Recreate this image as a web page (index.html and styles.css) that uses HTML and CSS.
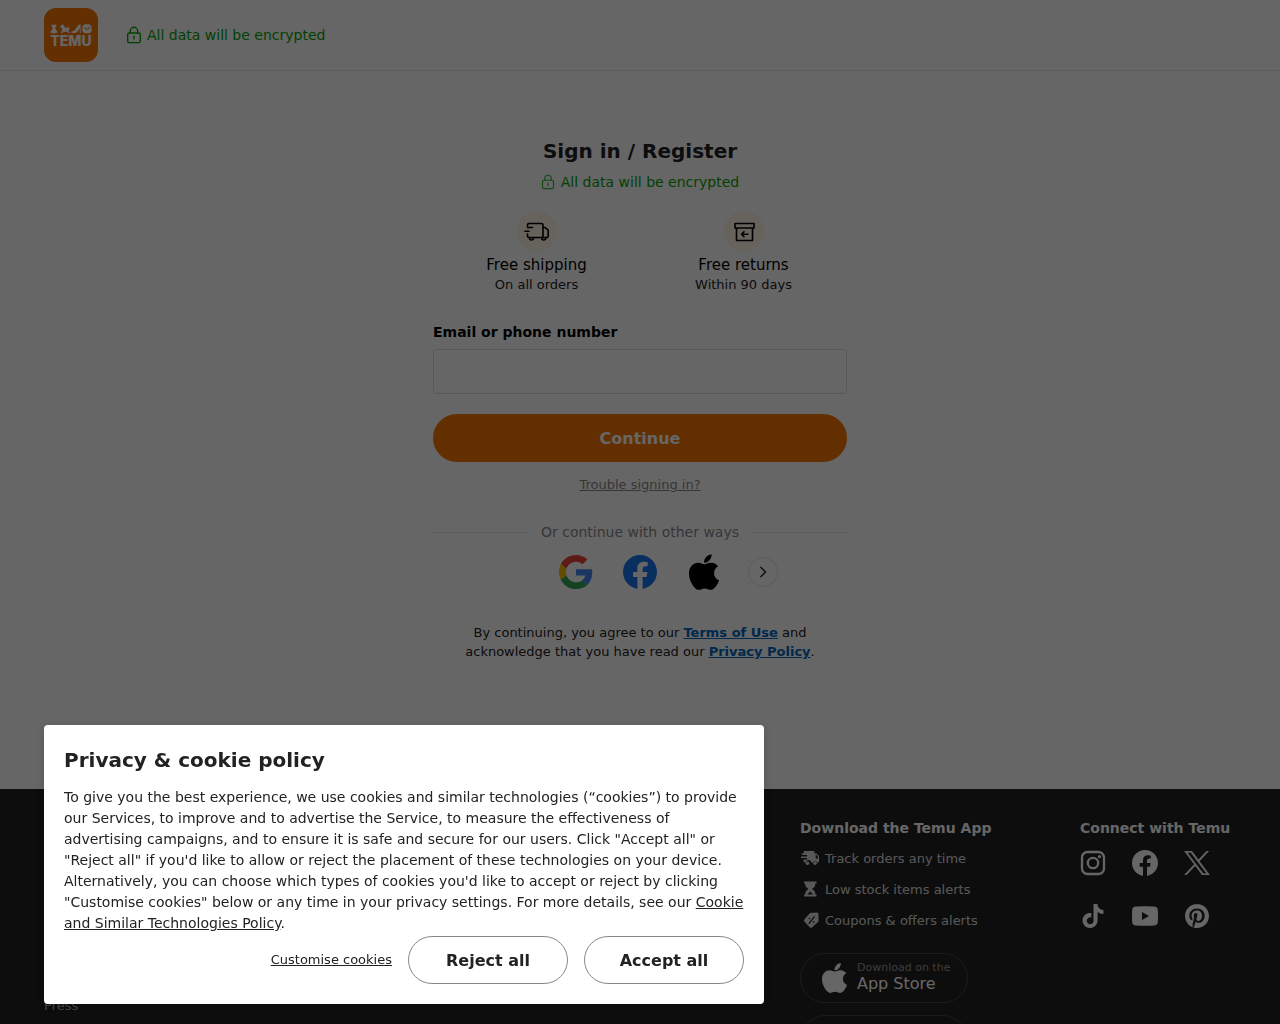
FILE: index.html
```
<!doctype html>
<html lang="en">
<head>
    <meta charset="UTF-8">
    <meta name="viewport" content="width=device-width, initial-scale=1.0">
    <link rel="stylesheet" href="styles.css">
    <title>Temu | Sign in</title>
</head>
<body>
    <!-- shared icons -->
    <svg class="sprite" width="0" height="0" aria-hidden="true">
        <symbol id="lock" viewBox="0 0 16 18">
            <g fill="none" stroke="currentColor" stroke-width="1.4" stroke-linecap="round">
                <rect x="1.7" y="7" width="12.6" height="9.6" rx="1.5"/>
                <path d="M4.3 7V5a3.7 3.7 0 0 1 7.4 0v2M8 10.3v2.8"/>
            </g>
        </symbol>
        <symbol id="apple" viewBox="4 32 376 448">
            <path fill="currentColor" d="M318.7 268.7c-.2-36.7 16.4-64.4 50-84.8-18.8-26.9-47.2-41.7-84.7-44.6-35.5-2.8-74.3 20.7-88.5 20.7-15 0-49.4-19.7-76.4-19.7C63.3 141.2 4 184.8 4 273.5q0 39.3 14.4 81.2c12.8 36.7 59 126.7 107.2 125.2 25.2-.6 43-17.9 75.8-17.9 31.8 0 48.3 17.9 76.4 17.9 48.6-.7 90.4-82.5 102.6-119.3-65.2-30.7-61.7-90-61.7-91.9zm-56.6-164.2c27.3-32.4 24.8-61.9 24-72.5-24.1 1.4-52 16.4-67.9 34.9-17.5 19.8-27.8 44.3-25.6 71.9 26.1 2 49.9-11.4 69.5-34.3z"/>
        </symbol>
        <symbol id="facebook" viewBox="0 0 24 24">
            <path fill="currentColor" d="M24 12.073c0-6.627-5.373-12-12-12s-12 5.373-12 12c0 5.99 4.388 10.954 10.125 11.854v-8.385H7.078v-3.47h3.047V9.43c0-3.007 1.792-4.669 4.533-4.669 1.312 0 2.686.235 2.686.235v2.953H15.83c-1.491 0-1.956.925-1.956 1.874v2.25h3.328l-.532 3.47h-2.796v8.385C19.612 23.027 24 18.062 24 12.073z"/>
        </symbol>
    </svg>

    <header class="header">
        <a class="logo" href="#" aria-label="Temu">
            <svg width="42" height="10" viewBox="0 0 42 10" fill="currentColor" aria-hidden="true">
                <path d="M2 0l1.3 1h1.4L6 0l.3 2.200-1 1.800C5.500 5.500 7.500 7 7.800 8.600 6 9.700 2 9.700.200 8.600.500 7 2.500 5.500 2.700 4l-1-1.800z"/>
                <path d="M10 2.600L12.300.400l1.200.400 1.700 3h2.300l1.300-1 1 2-1.500 1.400 1.500 2.500-1.200.5-1.500-1.500h-3.400l-1.600 1.500-1.200-.6L12.300 6l-.6-2.400-1.400.3z"/>
                <path d="M21.300 8.900V7.700c3-.4 5.200-3.200 6.600-6.400L30.500.200l.3 8.700h-.9l-.2-4.600c-1.500 2.400-2.700 4.600-4.500 4.600z"/>
                <path fill-rule="evenodd" d="M34.500.300h5l2.100 2.300v4.600L39.800 9.200h-5.500l-1.900-2V2.600zM34.200 3.100c.8 3.400 5 3.400 5.700 0l-1-.2c-.5 2-3.300 2-3.700 0z"/>
            </svg>
            <span>TEMU</span>
        </a>
        <p class="encrypted">
            <svg width="16" height="18" aria-hidden="true"><use href="#lock"/></svg>
            All data will be encrypted
        </p>
    </header>

    <main class="login">
        <h1>Sign in / Register</h1>
        <p class="encrypted encrypted-small">
            <svg width="14" height="16" aria-hidden="true"><use href="#lock"/></svg>
            All data will be encrypted
        </p>

        <div class="benefits">
            <div class="benefit">
                <span class="benefit-icon">
                    <svg width="26" height="24" viewBox="0 -2 26 24" fill="none" stroke="#000" stroke-width="1.600" stroke-linecap="round" stroke-linejoin="round" aria-hidden="true">
                        <path d="M3.500 5V4a1.500 1.500 0 0 1 1.500-1.500h12.500a1.500 1.500 0 0 1 1.500 1.500v12.500M3.500 6.500h5M1 10.200h4M3.500 13v2a1.500 1.500 0 0 0 1.500 1.500h14M19 6.500h2l3.200 2.700v5.800a1.500 1.500 0 0 1-1.500 1.500H19"/>
                        <path d="M5.500 17a2 2 0 0 0 4 0M17.800 17a2 2 0 0 0 4 0"/>
                    </svg>
                </span>
                <strong>Free shipping</strong>
                <span>On all orders</span>
            </div>
            <div class="benefit">
                <span class="benefit-icon">
                    <svg width="24" height="24" viewBox="-1.500 -3 24 24" fill="none" stroke="#000" stroke-width="1.600" stroke-linecap="round" stroke-linejoin="round" aria-hidden="true">
                        <path d="M1.500 1.500h19V6h-19zM3 6v12.500h16V6M8 12.300h6.500M10.500 9.800L8 12.300l2.500 2.500"/>
                    </svg>
                </span>
                <strong>Free returns</strong>
                <span>Within 90 days</span>
            </div>
        </div>

        <form class="form">
            <label for="account">Email or phone number</label>
            <input type="text" id="account" name="account">
            <button class="continue" type="submit">Continue</button>
        </form>
        <a class="trouble" href="#">Trouble signing in?</a>

        <div class="divider">Or continue with other ways</div>
        <div class="ways">
            <div class="ways-list">
                <button type="button" aria-label="Google">
                    <svg width="34" height="34" viewBox="0 0 48 48" aria-hidden="true">
                        <path fill="#EA4335" d="M24 9.500c3.540 0 6.710 1.220 9.210 3.600l6.850-6.850C35.900 2.380 30.470 0 24 0 14.620 0 6.510 5.380 2.560 13.220l7.980 6.190C12.430 13.720 17.740 9.500 24 9.500z"/>
                        <path fill="#4285F4" d="M46.980 24.550c0-1.570-.15-3.090-.38-4.550H24v9.020h12.940c-.58 2.960-2.260 5.480-4.780 7.180l7.730 6c4.510-4.180 7.090-10.360 7.090-17.650z"/>
                        <path fill="#FBBC05" d="M10.530 28.590c-.48-1.450-.76-2.990-.76-4.590s.27-3.140.76-4.590l-7.980-6.190C.92 16.460 0 20.120 0 24c0 3.880.92 7.540 2.560 10.780l7.970-6.190z"/>
                        <path fill="#34A853" d="M24 48c6.480 0 11.930-2.130 15.890-5.810l-7.730-6c-2.150 1.450-4.920 2.300-8.160 2.300-6.260 0-11.570-4.220-13.470-9.910l-7.980 6.190C6.510 42.620 14.620 48 24 48z"/>
                    </svg>
                </button>
                <button class="way-facebook" type="button" aria-label="Facebook">
                    <svg width="34" height="34" aria-hidden="true"><use href="#facebook"/></svg>
                </button>
                <button type="button" aria-label="Apple">
                    <svg width="30" height="36" aria-hidden="true"><use href="#apple"/></svg>
                </button>
            </div>
            <button class="more" type="button" aria-label="More ways">
                <svg width="8" height="12" viewBox="0 0 8 12" fill="none" stroke="currentColor" stroke-width="1.500" aria-hidden="true"><path d="M1.500 1l5 5-5 5"/></svg>
            </button>
        </div>

        <p class="terms">By continuing, you agree to our <a href="#">Terms of Use</a> and acknowledge that you have read our <a href="#">Privacy Policy</a>.</p>
    </main>

    <footer class="footer">
        <nav class="company">
            <a href="#">Press</a>
        </nav>
        <section>
            <h2>Download the Temu App</h2>
            <ul class="perks">
                <li>
                    <svg width="20" height="16" viewBox="0 0 20 16" aria-hidden="true">
                        <path fill="currentColor" d="M4 1h9.500a1 1 0 0 1 1 1v1.500h2l2.500 2.500v5.500L17.500 13a2.500 2.500 0 0 0-4.500-.5h-2A2.500 2.500 0 0 0 6 12.500H4.500L3.500 11V9.500H7V8H1V6.500h6V5H1.800V3.500H3.500z"/>
                        <circle cx="7.500" cy="13.200" r="1.800" fill="currentColor"/>
                        <circle cx="15" cy="13.200" r="1.800" fill="currentColor"/>
                        <path fill="#222" d="M15.700 5h.8l1.300 1.500v2h-2.100z"/>
                    </svg>
                    Track orders any time
                </li>
                <li>
                    <svg width="20" height="16" viewBox="0 0 20 16" aria-hidden="true">
                        <path fill="currentColor" fill-rule="evenodd" d="M4 .5h12.500v2h-1.200c0 3-1.500 4.200-3.300 5.500 1.800 1.300 3.300 2.500 3.300 5.500h1.200v2H4v-2h1.200c0-3 1.500-4.200 3.300-5.500C6.700 6.700 5.200 5.500 5.200 2.500H4zM7.200 13.500h6.100L10.250 10.500z"/>
                    </svg>
                    Low stock items alerts
                </li>
                <li>
                    <svg width="20" height="16" viewBox="0 0 20 16" aria-hidden="true">
                        <path fill="currentColor" d="M10 .9L16.800.5q1.700 0 1.700 1.500v7.500L12 15.500q-1 .8-2 0L4.300 9.500q-.8-1 0-2z"/>
                        <path fill="none" stroke="#222" stroke-width="1.300" stroke-linecap="round" d="M14.200 4.800l-5 6.500M9.200 6.200l.3.400M13.500 9.800l.3.400"/>
                    </svg>
                    Coupons &amp; offers alerts
                </li>
            </ul>
            <a class="store" href="#">
                <svg width="25" height="30" aria-hidden="true"><use href="#apple"/></svg>
                <span>
                    <small>Download on the</small>
                    App Store
                </span>
            </a>
            <a class="store" href="#" aria-label="Google Play"></a>
        </section>
        <section>
            <h2>Connect with Temu</h2>
            <div class="social">
                <a href="#" aria-label="Instagram">
                    <svg width="26" height="26" viewBox="0 0 26 26" fill="none" stroke="currentColor" stroke-width="2.300" aria-hidden="true">
                        <rect x="2" y="2" width="22" height="22" rx="5.500"/>
                        <circle cx="13" cy="13" r="5.200"/>
                        <circle cx="19.500" cy="6.700" r="1.600" fill="currentColor" stroke="none"/>
                    </svg>
                </a>
                <a href="#" aria-label="Facebook">
                    <svg width="26" height="26" aria-hidden="true"><use href="#facebook"/></svg>
                </a>
                <a href="#" aria-label="X">
                    <svg width="26" height="24" viewBox="0 0 24 24" preserveAspectRatio="none" fill="currentColor" stroke="currentColor" stroke-width=".3" aria-hidden="true"><path d="M14.234 10.162 22.977 0h-2.072l-7.591 8.824L7.251 0H.258l9.168 13.343L.258 24H2.330l8.016-9.318L16.749 24h6.993zm-2.837 3.299-.929-1.329L3.076 1.560h3.182l5.965 8.532.929 1.329 7.754 11.090h-3.182z"/></svg>
                </a>
                <a href="#" aria-label="TikTok">
                    <svg width="24" height="24" viewBox="0 0 24 24" fill="currentColor" aria-hidden="true"><path d="M12.525.02c1.310-.02 2.610-.01 3.910-.02.08 1.530.63 3.090 1.750 4.170 1.120 1.110 2.700 1.620 4.240 1.790v4.030c-1.440-.05-2.890-.35-4.200-.97-.57-.26-1.100-.59-1.620-.93-.01 2.920.01 5.840-.02 8.750-.08 1.400-.54 2.790-1.350 3.940-1.310 1.920-3.580 3.170-5.910 3.210-1.430.08-2.860-.31-4.080-1.030-2.020-1.190-3.440-3.370-3.650-5.710-.02-.5-.03-1-.01-1.490.18-1.900 1.120-3.720 2.580-4.960 1.660-1.440 3.980-2.130 6.150-1.720.02 1.480-.04 2.960-.04 4.440-.99-.32-2.150-.23-3.020.37-.63.41-1.110 1.040-1.360 1.750-.21.51-.15 1.070-.14 1.610.24 1.640 1.820 3.020 3.500 2.870 1.120-.01 2.190-.66 2.770-1.610.19-.33.4-.67.41-1.060.1-1.790.06-3.570.07-5.360.01-4.030-.01-8.050.02-12.070z"/></svg>
                </a>
                <a href="#" aria-label="YouTube">
                    <svg width="26" height="20" viewBox="0 0 26 20" aria-hidden="true"><path fill="currentColor" fill-rule="evenodd" d="M4 .5Q13-.2 22 .5q3.600.3 3.800 3.500.4 6 0 12-.2 3.200-3.800 3.500-9 .7-18 0Q.400 19.200.200 16q-.4-6 0-12Q.400.800 4 .5zM10 6v8l7-4z"/></svg>
                </a>
                <a href="#" aria-label="Pinterest">
                    <svg width="24" height="24" viewBox="0 0 24 24" fill="currentColor" aria-hidden="true"><path d="M12.017 0C5.396 0 .029 5.367.029 11.987c0 5.079 3.158 9.417 7.618 11.162-.105-.949-.199-2.403.041-3.439.219-.937 1.406-5.957 1.406-5.957s-.359-.72-.359-1.781c0-1.663.967-2.911 2.168-2.911 1.024 0 1.518.769 1.518 1.688 0 1.029-.653 2.567-.992 3.992-.285 1.193.6 2.165 1.775 2.165 2.128 0 3.768-2.245 3.768-5.487 0-2.861-2.063-4.869-5.008-4.869-3.410 0-5.409 2.562-5.409 5.199 0 1.033.394 2.143.889 2.741.099.12.112.225.085.345-.09.375-.293 1.199-.334 1.363-.053.225-.172.271-.401.165-1.495-.69-2.433-2.878-2.433-4.646 0-3.776 2.748-7.252 7.920-7.252 4.158 0 7.392 2.967 7.392 6.923 0 4.135-2.607 7.462-6.233 7.462-1.214 0-2.354-.629-2.758-1.379l-.749 2.848c-.269 1.045-1.004 2.352-1.498 3.146 1.123.345 2.306.535 3.550.535 6.607 0 11.985-5.365 11.985-11.987C23.970 5.390 18.592.026 11.985.026L12.017 0z"/></svg>
                </a>
            </div>
        </section>
    </footer>

    <div class="mask"></div>
    <div class="cookie" role="dialog" aria-labelledby="cookie-title">
        <h2 id="cookie-title">Privacy &amp; cookie policy</h2>
        <p>To give you the best experience, we use cookies and similar technologies (“cookies”) to provide our Services, to improve and to advertise the Service, to measure the effectiveness of advertising campaigns, and to ensure it is safe and secure for our users. Click "Accept all" or "Reject all" if you'd like to allow or reject the placement of these technologies on your device. Alternatively, you can choose which types of cookies you'd like to accept or reject by clicking "Customise cookies" below or any time in your privacy settings. For more details, see our <a href="#">Cookie and Similar Technologies Policy</a>.</p>
        <div class="cookie-actions">
            <a href="#">Customise cookies</a>
            <button type="button">Reject all</button>
            <button type="button">Accept all</button>
        </div>
    </div>
</body>
</html>
```

FILE: styles.css
```
* {
    box-sizing: border-box;
}

body {
    margin: 0;
    height: 100vh;
    overflow: hidden; /* no scrolling while the cookie dialog is open */
    background-color: #fff;
    color: #222;
    font-family: "DejaVu Sans", sans-serif;
    font-size: 14px;
    line-height: 20px;
}

h1,
h2,
p,
ul {
    margin: 0;
    padding: 0;
}

button {
    padding: 0;
    border: 0;
    background: none;
    color: inherit;
    font-family: inherit;
    cursor: pointer;
}

svg {
    display: block;
    flex: none;
}

.sprite {
    position: absolute;
}

/* header */
.header {
    display: flex;
    align-items: center;
    gap: 28px;
    height: 71px;
    padding: 0 44px;
    border-bottom: 1px solid #e5e5e5;
}

.logo {
    display: flex;
    flex-direction: column;
    align-items: center;
    justify-content: center;
    gap: 1px;
    width: 54px;
    height: 54px;
    border-radius: 12px;
    background-color: #fb7701;
    color: #fff;
    font-family: Inter, sans-serif;
    font-size: 14px;
    font-weight: 800;
    line-height: 12px;
    text-decoration: none;
}

.encrypted {
    display: flex;
    align-items: center;
    justify-content: center;
    gap: 5px;
    color: #09a309;
}

/* sign in */
.login {
    width: 100%;
    max-width: 414px;
    margin: 0 auto;
    padding: 68px 0 128px;
    text-align: center;
}

.login h1 {
    font-size: 20px;
    line-height: 24px;
}

.encrypted-small {
    gap: 6px;
    margin-top: 9px;
}

.encrypted-small svg {
    opacity: 0.8;
}

.benefits {
    display: grid;
    grid-template-columns: 1fr 1fr;
    margin-top: 19px;
}

.benefit {
    display: flex;
    flex-direction: column;
    align-items: center;
    font-size: 13px;
}

.benefit strong {
    color: #000;
    font-size: 15px;
    font-weight: normal;
}

.benefit-icon {
    display: flex;
    align-items: center;
    justify-content: center;
    width: 40px;
    height: 40px;
    margin-bottom: 4px;
    border-radius: 50%;
    background-color: #fff4e6;
}

.form {
    display: flex;
    flex-direction: column;
    margin-top: 27px;
}

.form label {
    margin-bottom: 7px;
    color: #000;
    font-weight: bold;
    text-align: left;
}

.form input {
    height: 45px;
    padding: 0 12px;
    border: 1px solid #ddd;
    border-radius: 4px;
    background-color: #fff;
    font-family: inherit;
    font-size: 16px;
}

.continue {
    height: 48px;
    margin-top: 20px;
    border-radius: 24px;
    background-color: #fb7701;
    color: #fff;
    font-size: 16px;
    font-weight: bold;
}

.trouble {
    display: block;
    margin-top: 13px;
    color: #888;
    font-size: 13px;
}

.divider {
    display: flex;
    align-items: center;
    gap: 12px;
    margin-top: 27px;
    color: #888;
}

.divider::before,
.divider::after {
    content: "";
    flex: 1;
    height: 1px;
    background-color: #e5e5e5;
}

.ways {
    display: grid;
    grid-template-columns: 1fr auto 1fr;
    align-items: center;
    height: 36px;
    margin-top: 12px;
}

.ways-list {
    display: flex;
    grid-column: 2;
    align-items: center;
    gap: 30px;
}

.ways-list button {
    display: flex;
    align-items: center;
    justify-content: center;
    width: 34px;
    height: 36px;
    color: #000;
}

.ways-list .way-facebook {
    color: #1877f2;
}

.more {
    display: flex;
    align-items: center;
    justify-content: center;
    width: 30px;
    height: 30px;
    margin-left: 27px;
    border: 1px solid #e5e5e5;
    border-radius: 50%;
}

.terms {
    margin: 33px 24px 0;
    font-size: 13px;
    line-height: 19px;
}

.terms a {
    color: #0066bf;
    font-weight: bold;
}

/* footer */
.footer {
    display: grid;
    grid-template-columns: 1fr 280px 156px;
    padding: 29px 44px;
    background-color: #222;
    color: #fff;
}

.footer h2 {
    font-size: 14px;
    line-height: 20px;
}

.footer a {
    color: #fff;
}

.company {
    padding-top: 178px;
    font-size: 13px;
}

.footer .company a {
    color: #aaa;
    text-decoration: none;
}

.perks {
    margin-top: 5px;
    font-size: 13px;
    list-style: none;
}

.perks li {
    display: flex;
    align-items: center;
    gap: 5px;
    height: 31px;
    color: #ddd;
}

.perks svg {
    margin-bottom: 2px;
}

.store {
    display: flex;
    align-items: center;
    gap: 10px;
    width: 168px;
    height: 50px;
    margin-top: 12px;
    padding: 0 16px 0 21px;
    border: 1px solid #444;
    border-radius: 25px;
    font-size: 16px;
    line-height: 18px;
    text-decoration: none;
}

.perks + .store {
    margin-top: 17px;
}

.store span {
    padding-bottom: 2px;
}

.store small {
    display: block;
    color: #999;
    font-size: 11px;
    line-height: 14px;
}

.social {
    display: grid;
    grid-template-columns: repeat(3, 26px);
    gap: 27px 26px;
    margin-top: 12px;
}

.social a {
    display: flex;
    align-items: center;
    justify-content: center;
    height: 26px;
}

/* cookie dialog */
.mask {
    position: fixed;
    inset: 0;
    background-color: rgba(0, 0, 0, 0.6);
}

.cookie {
    position: fixed;
    bottom: 20px;
    left: 44px;
    width: 720px;
    max-width: calc(100% - 88px);
    padding: 20px;
    border-radius: 4px;
    background-color: #fff;
    box-shadow: 0 2px 8px rgba(0, 0, 0, 0.15);
}

.cookie h2 {
    font-size: 20px;
    line-height: 30px;
}

.cookie p {
    margin-top: 12px;
    line-height: 21px;
}

.cookie a {
    color: inherit;
}

.cookie-actions {
    display: flex;
    align-items: center;
    justify-content: flex-end;
    gap: 16px;
    margin-top: 2px;
    font-size: 13px;
}

.cookie-actions button {
    width: 160px;
    height: 48px;
    border: 1px solid #888;
    border-radius: 24px;
    font-size: 16px;
    font-weight: bold;
}
```
